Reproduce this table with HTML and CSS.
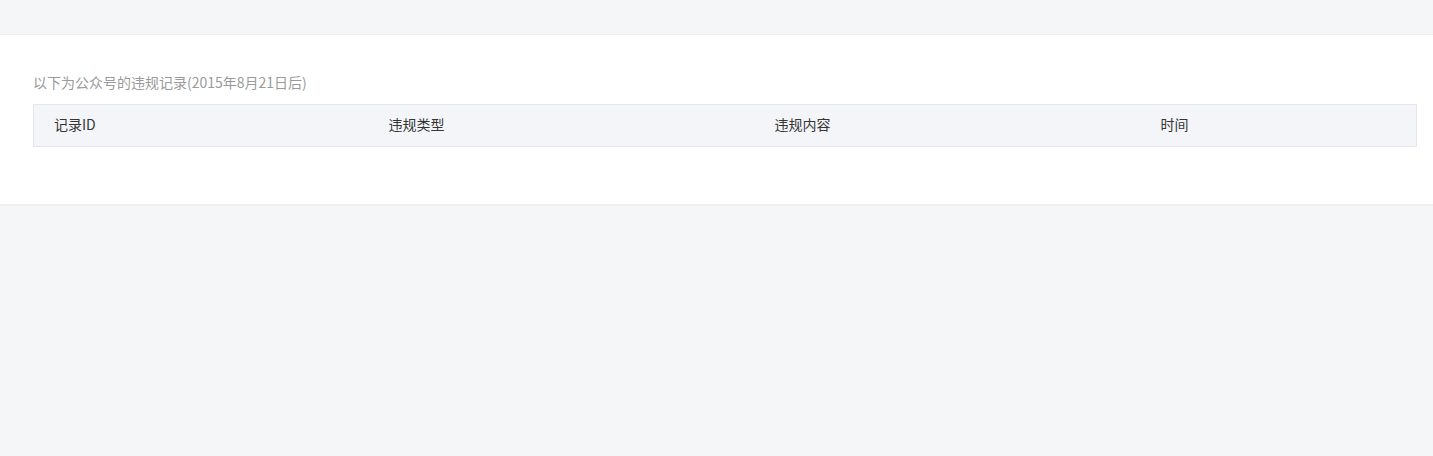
FILE: index.html
```html
<!DOCTYPE html>
<html lang="zh">
<head>
<meta charset="utf-8">
<link rel="stylesheet" href="styles.css">
</head>
<body>
<div class="top"></div>
<section class="panel">
  <p class="caption">以下为公众号的违规记录(2015年8月21日后)</p>
  <table class="records">
    <thead>
      <tr>
        <th class="c1">记录ID</th>
        <th class="c2">违规类型</th>
        <th class="c3">违规内容</th>
        <th class="c4">时间</th>
      </tr>
    </thead>
  </table>
</section>
</body>
</html>
```
FILE: styles.css
```css
html, body {
  margin: 0;
  padding: 0;
  background: #f5f6f8;
  font-family: "Noto Sans CJK SC", "Noto Sans", sans-serif;
}
.top {
  height: 34px;
  border-bottom: 1px solid #eeeff2;
}
.panel {
  background: #fff;
  padding: 35px 16px 57px 33px;
  border-bottom: 2px solid #eeeff1;
}
.caption {
  margin: 0 0 10px;
  font-size: 14px;
  line-height: 24px;
  color: #9a9a9a;
}
.records {
  width: 100%;
  border-collapse: collapse;
  table-layout: fixed;
}
.records th {
  box-sizing: border-box;
  background: #f4f5f9;
  border-top: 1px solid #e4e7ed;
  border-bottom: 1px solid #e4e7ed;
  padding: 9px 0 12px 20px;
  line-height: 20px;
  text-align: left;
  font-weight: normal;
  font-size: 14px;
  color: #353535;
}
.records th.c1 { border-left: 1px solid #e4e7ed; width: 335px; }
.records th.c2 { width: 386px; }
.records th.c3 { width: 386px; }
.records th.c4 { border-right: 1px solid #e4e7ed; }
```
